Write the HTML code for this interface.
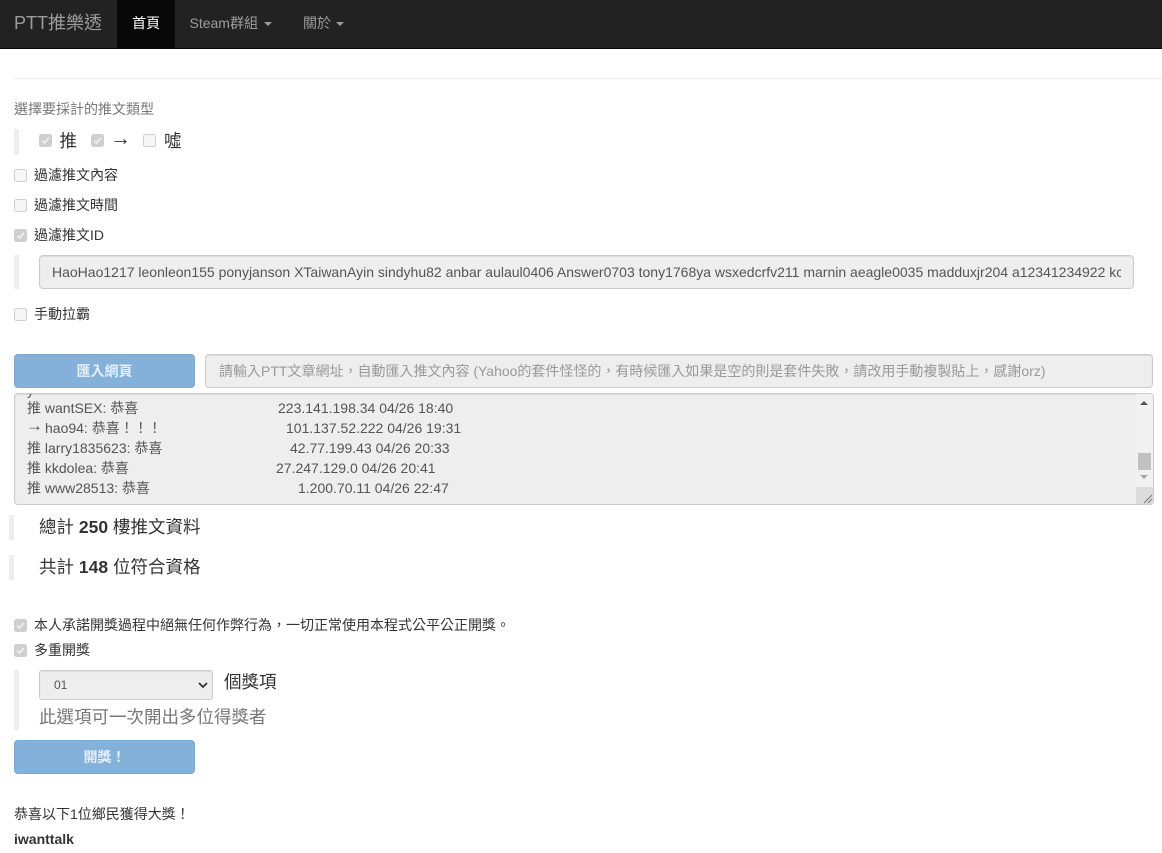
<!DOCTYPE html>
<html lang="zh-Hant">
<head>
<meta charset="utf-8">
<title>PTT推樂透</title>
<style>
html,body{margin:0;padding:0;background:#fff}
body{position:relative;width:1162px;height:853px;overflow:hidden;font-family:"Liberation Sans","Noto Sans CJK TC",sans-serif;font-size:14px;color:#333}
.a{position:absolute;white-space:pre;line-height:20px}
.nav{position:absolute;left:0;top:0;width:1162px;height:48px;background:#222;border-bottom:1px solid #080808}
.caret{position:absolute;width:0;height:0;border-top:4px solid #9d9d9d;border-left:4px solid transparent;border-right:4px solid transparent}
.bar{position:absolute;width:5px;background:#eee}
.cb{position:absolute;width:11px;height:11px;border:1px solid #cfcfcf;border-radius:2.5px;background:#f6f6f6}
.cb.on{background:#cfcfcf;border-color:#cfcfcf}
.cb.on svg{position:absolute;left:0;top:0;width:11px;height:11px}
.field{position:absolute;box-sizing:border-box;background:#eee;border:1px solid #ccc;border-radius:4px;overflow:hidden;box-shadow:inset 0 1px 1px rgba(0,0,0,.075)}
.btn{position:absolute;left:14px;width:181px;box-sizing:border-box;background:#84b1da;border:1px solid #7ba9d4;border-radius:4px;font-weight:bold;text-align:center;color:#e6eff7}
.big{font-size:17.5px;line-height:25px}
</style>
</head>
<body>
<div class="nav"></div>
<div class="a" style="left:14px;top:12px;font-size:18px;line-height:22px;color:#9d9d9d">PTT推樂透</div>
<div style="position:absolute;left:117px;top:0;width:58px;height:48px;background:#080808"></div>
<div class="a" style="left:132px;top:13px;color:#fff">首頁</div>
<div class="a" style="left:189.5px;top:13px;color:#9d9d9d">Steam群組</div>
<div class="caret" style="left:264px;top:22px"></div>
<div class="a" style="left:303px;top:13px;color:#9d9d9d">關於</div>
<div class="caret" style="left:336px;top:22px"></div>

<div style="position:absolute;left:14px;top:78px;width:1148px;height:1px;background:#eee"></div>

<div class="a" style="left:14px;top:99px;color:#777">選擇要採計的推文類型</div>

<div class="bar" style="left:14px;top:129px;height:26px"></div>
<div class="cb on" style="left:39px;top:134px"><svg viewBox="0 0 11 11"><path d="M2.2 5.6 4.6 8 8.9 2.8" fill="none" stroke="#eee" stroke-width="1.8"/></svg></div>
<div class="a big" style="left:59.5px;top:129px">推</div>
<div class="cb on" style="left:91px;top:134px"><svg viewBox="0 0 11 11"><path d="M2.2 5.6 4.6 8 8.9 2.8" fill="none" stroke="#eee" stroke-width="1.8"/></svg></div>
<div class="a" style="left:110px;top:126px;font-size:21px;line-height:25px">→</div>
<div class="cb" style="left:143px;top:134px"></div>
<div class="a big" style="left:164px;top:129px">噓</div>

<div class="cb" style="left:14px;top:169px"></div>
<div class="a" style="left:34px;top:165px">過濾推文內容</div>
<div class="cb" style="left:14px;top:199px"></div>
<div class="a" style="left:34px;top:195px">過濾推文時間</div>
<div class="cb on" style="left:14px;top:229px"><svg viewBox="0 0 11 11"><path d="M2.2 5.6 4.6 8 8.9 2.8" fill="none" stroke="#eee" stroke-width="1.8"/></svg></div>
<div class="a" style="left:34px;top:225px">過濾推文ID</div>

<div class="bar" style="left:14px;top:255px;height:34px"></div>
<div class="field" style="left:39px;top:255px;width:1095px;height:34px">
  <div class="a" style="left:12px;top:6px;width:1069px;overflow:hidden;color:#555">HaoHao1217 leonleon155 ponyjanson XTaiwanAyin sindyhu82 anbar aulaul0406 Answer0703 tony1768ya wsxedcrfv211 marnin aeagle0035 madduxjr204 a12341234922 kc</div>
</div>

<div class="cb" style="left:14px;top:308px"></div>
<div class="a" style="left:34px;top:304px">手動拉霸</div>

<div class="btn" style="top:354px;height:34px;line-height:32px">匯入網頁</div>
<div class="field" style="left:205px;top:354px;width:948px;height:34px">
  <div class="a" style="left:13px;top:6px;color:#999">請輸入PTT文章網址，自動匯入推文內容 (Yahoo的套件怪怪的，有時候匯入如果是空的則是套件失敗，請改用手動複製貼上，感謝orz)</div>
</div>

<div class="field" style="left:14px;top:393px;width:1140px;height:112px">
  <div class="a" style="left:12px;top:-14px;color:#555">y</div>
  <div class="a" style="left:12px;top:4px;color:#555">推 wantSEX: 恭喜</div>
  <div class="a" style="left:263px;top:4px;color:#555">223.141.198.34 04/26 18:40</div>
  <div class="a" style="left:11px;top:22px;font-size:17px;color:#555">→</div>
  <div class="a" style="left:30px;top:24px;color:#555">hao94: 恭喜！！！</div>
  <div class="a" style="left:271px;top:24px;color:#555">101.137.52.222 04/26 19:31</div>
  <div class="a" style="left:12px;top:44px;color:#555">推 larry1835623: 恭喜</div>
  <div class="a" style="left:275px;top:44px;color:#555">42.77.199.43 04/26 20:33</div>
  <div class="a" style="left:12px;top:64px;color:#555">推 kkdolea: 恭喜</div>
  <div class="a" style="left:261px;top:64px;color:#555">27.247.129.0 04/26 20:41</div>
  <div class="a" style="left:12px;top:84px;color:#555">推 www28513: 恭喜</div>
  <div class="a" style="left:283px;top:84px;color:#555">1.200.70.11 04/26 22:47</div>
  <div style="position:absolute;left:1121px;top:0;width:17px;height:110px;background:#f1f1f1"></div>
  <div style="position:absolute;left:1125px;top:7px;width:0;height:0;border-left:4px solid transparent;border-right:4px solid transparent;border-bottom:4px solid #505050"></div>
  <div style="position:absolute;left:1123px;top:59px;width:13px;height:17px;background:#c1c1c1"></div>
  <div style="position:absolute;left:1125px;top:81px;width:0;height:0;border-left:4px solid transparent;border-right:4px solid transparent;border-top:4px solid #a3a3a3"></div>
  <div style="position:absolute;left:1121px;top:93px;width:17px;height:17px;background:#dcdcdc"></div>
  <svg style="position:absolute;left:1127px;top:99px" width="11" height="11" viewBox="0 0 11 11"><path d="M2 10 10 2M6 10 10 6" stroke="#777" stroke-width="1" fill="none"/></svg>
</div>

<div class="bar" style="left:9px;top:515px;height:25px"></div>
<div class="a big" style="left:39px;top:515px">總計 <b>250</b> 樓推文資料</div>
<div class="bar" style="left:9px;top:555px;height:25px"></div>
<div class="a big" style="left:39px;top:555px">共計 <b>148</b> 位符合資格</div>

<div class="cb on" style="left:14px;top:619px"><svg viewBox="0 0 11 11"><path d="M2.2 5.6 4.6 8 8.9 2.8" fill="none" stroke="#eee" stroke-width="1.8"/></svg></div>
<div class="a" style="left:34px;top:615px">本人承諾開獎過程中絕無任何作弊行為，一切正常使用本程式公平公正開獎。</div>
<div class="cb on" style="left:14px;top:644px"><svg viewBox="0 0 11 11"><path d="M2.2 5.6 4.6 8 8.9 2.8" fill="none" stroke="#eee" stroke-width="1.8"/></svg></div>
<div class="a" style="left:34px;top:640px">多重開獎</div>

<div class="bar" style="left:14px;top:670px;height:60px"></div>
<div class="field" style="left:39px;top:670px;width:174px;height:30px;border-radius:3px">
  <div class="a" style="left:14px;top:4px;font-size:12px;color:#555">01</div>
  <svg style="position:absolute;left:158px;top:11px" width="10" height="7" viewBox="0 0 10 7"><path d="M1 1 5 5 9 1" fill="none" stroke="#333" stroke-width="1.8"/></svg>
</div>
<div class="a big" style="left:224px;top:670px">個獎項</div>
<div class="a big" style="left:39px;top:705px;color:#777">此選項可一次開出多位得獎者</div>

<div class="btn" style="top:740px;height:34px;line-height:32px">開獎！</div>

<div class="a" style="left:14px;top:804px">恭喜以下1位鄉民獲得大獎！</div>
<div class="a" style="left:14px;top:829px;font-weight:bold">iwanttalk</div>
</body>
</html>
